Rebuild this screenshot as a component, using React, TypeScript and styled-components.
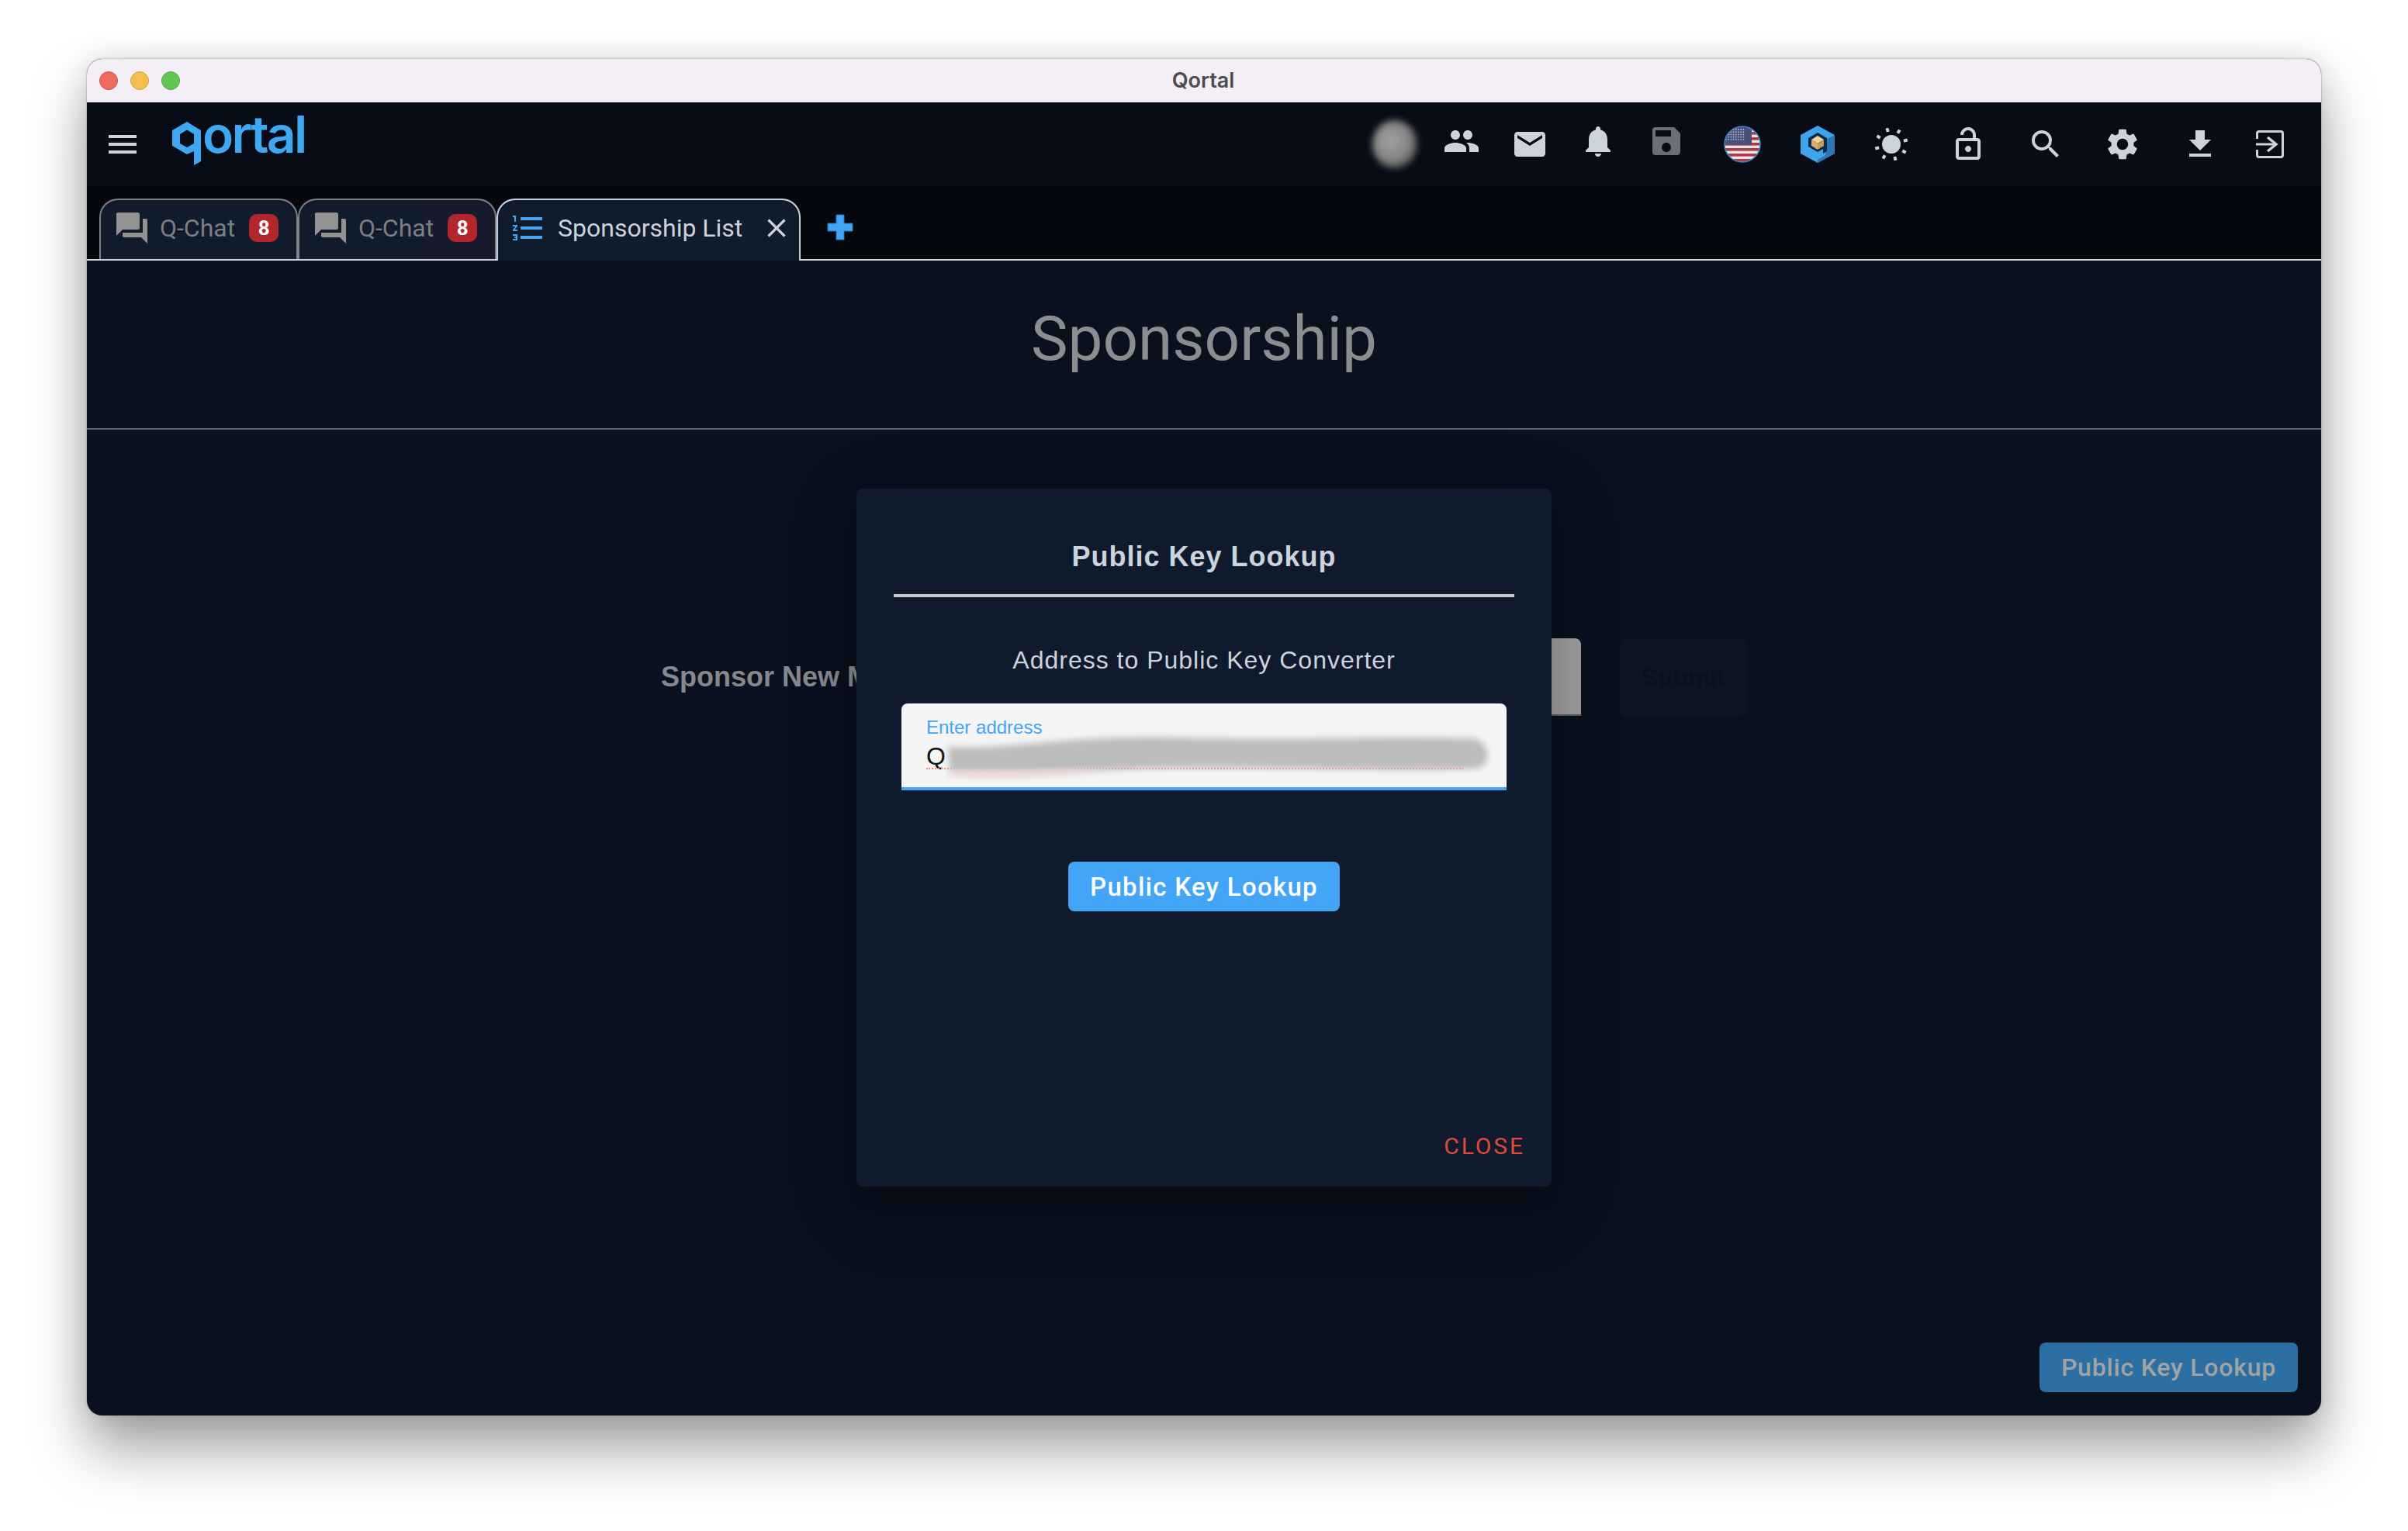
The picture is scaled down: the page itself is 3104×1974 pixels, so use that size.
import styled, { createGlobalStyle } from "styled-components";
import {
  MdMenu,
  MdGroup,
  MdEmail,
  MdNotifications,
  MdSave,
  MdOutlineLockOpen,
  MdSearch,
  MdSettings,
  MdFileDownload,
  MdForum,
  MdFormatListNumbered,
  MdClose,
} from "react-icons/md";

const GlobalStyle = createGlobalStyle`
  html, body {
    margin: 0;
    background: #fff;
  }
  * {
    box-sizing: border-box;
  }
`;

function QortalLogo() {
  return (
    <LogoSvg width="190" height="96" viewBox="0 -20 190 96">
      <path
        fillRule="evenodd"
        fill="#3fa8f2"
        d="M0 20 19 9 37 20V60L28 65V47L19 51 0 40ZM10 25V37L19 42 28 37V25L19 19.5Z"
      />
      <text x="39" y="49" fill="#3fa8f2" fontFamily="Inter, sans-serif" fontWeight="600" fontSize="66" letterSpacing="-2.8">
        ortal
      </text>
    </LogoSvg>
  );
}

function FlagIcon() {
  const stripes = [0, 1, 2, 3, 4, 5, 6];
  const stars = [];
  for (let r = 0; r < 5; r++) {
    for (let c = 0; c < 8; c++) {
      stars.push(<circle key={`${r}-${c}`} cx={3 + c * 3.2} cy={5 + r * 3.2} r="0.9" fill="#b9bed2" />);
    }
  }
  return (
    <svg width="48" height="48" viewBox="0 0 48 48">
      <defs>
        <clipPath id="flag-clip">
          <circle cx="24" cy="24" r="23" />
        </clipPath>
      </defs>
      <g clipPath="url(#flag-clip)">
        <rect width="48" height="48" fill="#e8e4e6" />
        {stripes.map((s) => (
          <rect key={s} x="0" y={s * 7 + 1} width="48" height="3.6" fill="#ad3a48" />
        ))}
        <rect width="36" height="25" fill="#4a4f7c" />
        {stars}
      </g>
      <circle cx="24" cy="24" r="23" fill="none" stroke="#3d86c4" strokeWidth="1.6" />
    </svg>
  );
}

function QortalHexIcon() {
  return (
    <svg width="48" height="48" viewBox="0 0 48 48">
      <path d="M24 0 46 12V36L24 48 2 36V12Z" fill="#3fa4ee" />
      <path d="M24 48 46 36V12L34 18V38L24 44Z" fill="#2b78b4" />
      <path d="M24 9 36 16V33L31 36V30L24 34 12 27V16Z" fill="#0b2c48" />
      <path d="M24 13 32 18 24 23 16 18Z" fill="#f1d49b" />
      <path d="M16 18 24 23V31L16 26Z" fill="#dcaf6d" />
      <path d="M32 18 24 23V31L32 26Z" fill="#c99a5c" />
    </svg>
  );
}

function SunIcon() {
  const ticks = [0, 1, 2, 3, 4, 5, 6, 7];
  return (
    <svg width="44" height="44" viewBox="0 0 44 44" fill="#ccd3dc">
      <circle cx="22" cy="22" r="12" />
      {ticks.map((t) => (
        <rect key={t} x="20" y="0.5" width="4" height="5" transform={`rotate(${t * 45 - 15} 22 22)`} />
      ))}
    </svg>
  );
}

function LoginIcon() {
  return (
    <svg width="36" height="36" viewBox="0 0 36 36" fill="none" stroke="#ccd3dc" strokeWidth="3">
      <path d="M1.5 11V4Q1.5 1.5 4 1.5H32Q34.5 1.5 34.5 4V32Q34.5 34.5 32 34.5H4Q1.5 34.5 1.5 32V25" />
      <path d="M0 18H25" />
      <path d="M15 9 26 18 15 27" strokeWidth="3.4" />
    </svg>
  );
}

function PlusIcon() {
  return (
    <svg width="34" height="34" viewBox="0 0 34 34">
      <path d="M12 1H22V12H33V22H22V33H12V22H1V12H12Z" fill="#42a5f5" stroke="#2d73aa" strokeWidth="1" />
    </svg>
  );
}

function AddressSmear() {
  return (
    <SmearSvg width="740" height="80" viewBox="0 0 740 80">
      <defs>
        <filter id="smear-blur" x="-5%" y="-40%" width="110%" height="180%">
          <feGaussianBlur stdDeviation="4" />
        </filter>
      </defs>
      <path
        filter="url(#smear-blur)"
        fill="#bcbcbc"
        d="M30 26C120 30 180 10 330 14 450 18 560 12 706 15 730 18 732 50 712 54 560 58 420 50 280 54 180 58 90 62 32 58Z"
      />
      <path
        filter="url(#smear-blur)"
        fill="#f0d6d6"
        d="M30 58C90 56 160 56 240 56 170 66 90 68 30 64Z"
      />
    </SmearSvg>
  );
}

const tabs = [{ id: "chat-1" }, { id: "chat-2", tinted: true }];

const toolbarIcons = [
  { id: "group", gap: 41, up: true, node: <MdGroup size={48} /> },
  { id: "mail", gap: 40, node: <MdEmail size={48} /> },
  { id: "bell", gap: 40, up: true, node: <MdNotifications size={48} /> },
  { id: "save", gap: 40, up: true, dim: true, node: <MdSave size={48} /> },
  { id: "flag", gap: 50, node: <FlagIcon /> },
  { id: "hex", gap: 49, node: <QortalHexIcon /> },
  { id: "sun", gap: 47, node: <SunIcon /> },
  { id: "lock", gap: 51, node: <MdOutlineLockOpen size={48} /> },
  { id: "search", gap: 52, node: <MdSearch size={48} /> },
  { id: "settings", gap: 51, node: <MdSettings size={48} /> },
  { id: "download", gap: 52, node: <MdFileDownload size={48} /> },
  { id: "login", gap: 42, node: <LoginIcon /> },
];

function App() {
  return (
    <Page>
      <GlobalStyle />
      <Window>
        <TitleBar>
          <Lights>
            <Light $color="#ee6a5f" $edge="#d2514a" />
            <Light $color="#f6be50" $edge="#d9a03d" />
            <Light $color="#61c554" $edge="#4dab43" />
          </Lights>
          <WindowTitle>Qortal</WindowTitle>
        </TitleBar>

        <Header>
          <MenuButton>
            <MdMenu size={48} />
          </MenuButton>
          <QortalLogo />
          <Toolbar>
            <IconSlot>
              <Avatar />
            </IconSlot>
            {toolbarIcons.map((icon) => (
              <IconSlot key={icon.id} $gap={icon.gap} $up={icon.up} $dim={icon.dim}>
                {icon.node}
              </IconSlot>
            ))}
          </Toolbar>
        </Header>

        <TabBar>
          {tabs.map((tab) => (
            <Tab key={tab.id} $tinted={tab.tinted}>
              <TabIcon>
                <MdForum size={48} />
              </TabIcon>
              <TabLabel>Q-Chat</TabLabel>
              <Badge>8</Badge>
            </Tab>
          ))}
          <Tab $active>
            <TabIcon $active>
              <MdFormatListNumbered size={48} />
            </TabIcon>
            <TabLabel $active>Sponsorship List</TabLabel>
            <TabClose>
              <MdClose size={40} />
            </TabClose>
          </Tab>
          <AddTab>
            <PlusIcon />
          </AddTab>
        </TabBar>

        <Content>
          <Heading>
            <h1>Sponsorship</h1>
          </Heading>
          <SponsorRow>
            <SponsorLabel>Sponsor New Member</SponsorLabel>
            <SponsorInput />
            <SubmitButton>Submit</SubmitButton>
          </SponsorRow>
          <ContentFooter>
            <LookupButton>Public Key Lookup</LookupButton>
          </ContentFooter>
        </Content>

        <Modal>
          <ModalTitle>Public Key Lookup</ModalTitle>
          <ModalText>Address to Public Key Converter</ModalText>
          <Field>
            <FieldLabel>Enter address</FieldLabel>
            <FieldValue>Q</FieldValue>
            <SpellLine />
            <AddressSmear />
          </Field>
          <ModalButton>Public Key Lookup</ModalButton>
          <ModalActions>
            <CloseButton>CLOSE</CloseButton>
          </ModalActions>
        </Modal>
      </Window>
    </Page>
  );
}

export default App;

const Page = styled.div`
  width: 3104px;
  height: 1974px;
  padding: 76px 112px 148px;
  background: #fff;
  overflow: hidden;
`;

const Window = styled.div`
  position: relative;
  display: flex;
  flex-direction: column;
  width: 2880px;
  height: 1749px;
  border-radius: 20px;
  overflow: hidden;
  background: #0a111e;
  box-shadow: 0 44px 72px rgba(0, 0, 0, 0.36), 0 0 40px rgba(0, 0, 0, 0.12), 0 0 2px rgba(0, 0, 0, 0.45);
`;

const TitleBar = styled.div`
  position: relative;
  flex: none;
  display: flex;
  align-items: center;
  justify-content: center;
  height: 56px;
  padding: 0 2px 2px 0;
  background: #f4eff7;
`;

const Lights = styled.div`
  position: absolute;
  left: 16px;
  top: 16px;
  display: flex;
  gap: 16px;
`;

const Light = styled.span<{ $color: string; $edge: string }>`
  width: 24px;
  height: 24px;
  border-radius: 50%;
  background: ${(p) => p.$color};
  border: 1px solid ${(p) => p.$edge};
`;

const WindowTitle = styled.div`
  font: 600 27px Inter, sans-serif;
  color: #4d4b50;
`;

const Header = styled.header`
  flex: none;
  display: flex;
  align-items: center;
  height: 108px;
  padding: 0 42px 0 22px;
  background: #080c16;
`;

const MenuButton = styled.div`
  display: flex;
  color: #d0d5dc;
  margin-right: 40px;
`;

const LogoSvg = styled.svg`
  display: block;
  flex: none;
  margin-bottom: 20px;
`;

const Toolbar = styled.div`
  display: flex;
  align-items: center;
  margin-left: auto;
`;

const IconSlot = styled.div<{ $gap?: number; $up?: boolean; $dim?: boolean }>`
  display: flex;
  align-items: center;
  justify-content: center;
  width: 48px;
  height: 48px;
  margin-left: ${(p) => p.$gap ?? 0}px;
  margin-bottom: ${(p) => (p.$up ? 8 : 0)}px;
  color: ${(p) => (p.$dim ? "#6b7078" : "#ccd3dc")};
`;

const Avatar = styled.div`
  width: 58px;
  height: 62px;
  flex: none;
  margin-left: 6px;
  border-radius: 50%;
  background: radial-gradient(circle at 42% 44%, #a2a2a2, #858585 48%, #555 72%, rgba(60, 60, 60, 0.4) 100%);
  filter: blur(4px);
`;

const TabBar = styled.div`
  flex: none;
  display: flex;
  align-items: flex-end;
  height: 96px;
  padding-left: 16px;
  background: #05080f;
  border-bottom: 2px solid #d0d5da;
`;

const Tab = styled.div<{ $active?: boolean; $tinted?: boolean }>`
  display: flex;
  align-items: center;
  width: ${(p) => (p.$active ? 392 : 256)}px;
  height: ${(p) => (p.$active ? 80 : 78)}px;
  margin-bottom: ${(p) => (p.$active ? -2 : 0)}px;
  padding: 0 0 ${(p) => (p.$active ? 6 : 4)}px ${(p) => (p.$active ? 15 : 16)}px;
  background: ${(p) =>
    p.$tinted ? "linear-gradient(90deg, #101b2c 64%, #171a2c 64%)" : "#101b2c"};
  border: 2px solid ${(p) => (p.$active ? "#ccd3dc" : "#7d7f82")};
  border-bottom: none;
  border-radius: 24px 24px 0 0;
`;

const TabIcon = styled.span<{ $active?: boolean }>`
  display: flex;
  color: ${(p) => (p.$active ? "#42a5f5" : "#929292")};
`;

const TabLabel = styled.span<{ $active?: boolean }>`
  margin-left: ${(p) => (p.$active ? 14 : 12)}px;
  font: 400 32px Roboto, sans-serif;
  color: ${(p) => (p.$active ? "#ccd3dc" : "#7b7f83")};
  white-space: nowrap;
`;

const Badge = styled.span`
  display: flex;
  align-items: center;
  justify-content: center;
  width: 38px;
  height: 36px;
  margin-left: 18px;
  border-radius: 10px;
  background: #b3272c;
  color: #fff;
  font: 700 26px Roboto, sans-serif;
`;

const TabClose = styled.span`
  display: flex;
  margin-left: 24px;
  color: #ccd3dc;
`;

const AddTab = styled.div`
  display: flex;
  align-items: center;
  height: 78px;
  padding: 0 0 4px 34px;
`;

const Content = styled.main`
  flex: 1;
  display: flex;
  flex-direction: column;
  min-height: 0;
`;

const Heading = styled.div`
  flex: none;
  display: flex;
  justify-content: center;
  height: 218px;
  padding-top: 49px;
  border-bottom: 2px solid #5f646a;

  h1 {
    margin: 0;
    font: 400 80px/1.3 Roboto, sans-serif;
    color: #8b8e91;
  }
`;

const SponsorRow = styled.div`
  flex: none;
  display: flex;
  align-items: center;
  width: 1400px;
  height: 100px;
  margin: 269px auto 0;
`;

const SponsorLabel = styled.div`
  font: 700 36px "Liberation Sans", sans-serif;
  color: #85888c;
  white-space: nowrap;
`;

const SponsorInput = styled.div`
  flex: 1;
  align-self: stretch;
  margin: 0 50px 0 24px;
  background: #9c9c9c;
  border-bottom: 2px solid #5c5c5c;
  border-radius: 8px 8px 0 0;
`;

const SubmitButton = styled.div`
  display: flex;
  align-items: center;
  justify-content: center;
  align-self: stretch;
  width: 164px;
  background: #0d1624;
  border-radius: 8px;
  color: #0a1220;
  font: 700 32px "Liberation Sans", sans-serif;
`;

const ContentFooter = styled.div`
  margin-top: auto;
  display: flex;
  justify-content: flex-end;
  padding: 0 30px 30px 0;
`;

const LookupButton = styled.div`
  display: flex;
  align-items: center;
  justify-content: center;
  width: 333px;
  height: 64px;
  border-radius: 8px;
  background: #2c6fa3;
  color: #a3a3a3;
  font: 500 32px Roboto, sans-serif;
  letter-spacing: 0.8px;
`;

const Modal = styled.div`
  position: absolute;
  left: 992px;
  top: 554px;
  display: flex;
  flex-direction: column;
  width: 896px;
  height: 900px;
  border-radius: 8px;
  background: #0f1a2d;
  box-shadow: 0 22px 30px -14px rgba(0, 0, 0, 0.18), 0 48px 76px 6px rgba(0, 0, 0, 0.1), 0 18px 92px 16px rgba(0, 0, 0, 0.08);
`;

const ModalTitle = styled.div`
  margin: 64px 48px 0;
  height: 76px;
  border-bottom: 4px solid #c8c8c8;
  text-align: center;
  font: 700 36px/48px "Liberation Sans", sans-serif;
  letter-spacing: 1px;
  color: #ccd3dc;
`;

const ModalText = styled.div`
  margin-top: 61px;
  text-align: center;
  font: 400 32px/40px "Liberation Sans", sans-serif;
  letter-spacing: 1px;
  color: #ccd3dc;
`;

const Field = styled.div`
  position: relative;
  flex: none;
  width: 780px;
  height: 112px;
  margin: 36px auto 0;
  padding: 18px 32px 0;
  background: #f5f5f5;
  border-bottom: 4px solid #42a5f5;
  border-radius: 8px 8px 0 0;
`;

const FieldLabel = styled.div`
  font: 400 24px/26px "Liberation Sans", sans-serif;
  color: #42a5f5;
`;

const FieldValue = styled.div`
  margin-top: 6px;
  font: 400 32px/36px "Liberation Sans", sans-serif;
  color: #111;
`;

const SpellLine = styled.div`
  position: absolute;
  left: 32px;
  top: 83px;
  width: 692px;
  border-top: 2px dotted #f08a84;
`;

const SmearSvg = styled.svg`
  position: absolute;
  left: 30px;
  top: 30px;
`;

const ModalButton = styled.div`
  flex: none;
  display: flex;
  align-items: center;
  justify-content: center;
  width: 350px;
  height: 64px;
  margin: 92px auto 0;
  border-radius: 8px;
  background: #42a5f5;
  color: #fff;
  font: 500 33px Roboto, sans-serif;
  letter-spacing: 1.3px;
`;

const ModalActions = styled.div`
  margin-top: auto;
  display: flex;
  justify-content: flex-end;
  padding: 0 34px 32px 0;
`;

const CloseButton = styled.div`
  font: 400 30px/40px Roboto, sans-serif;
  letter-spacing: 2.9px;
  color: #e0483e;
`;
